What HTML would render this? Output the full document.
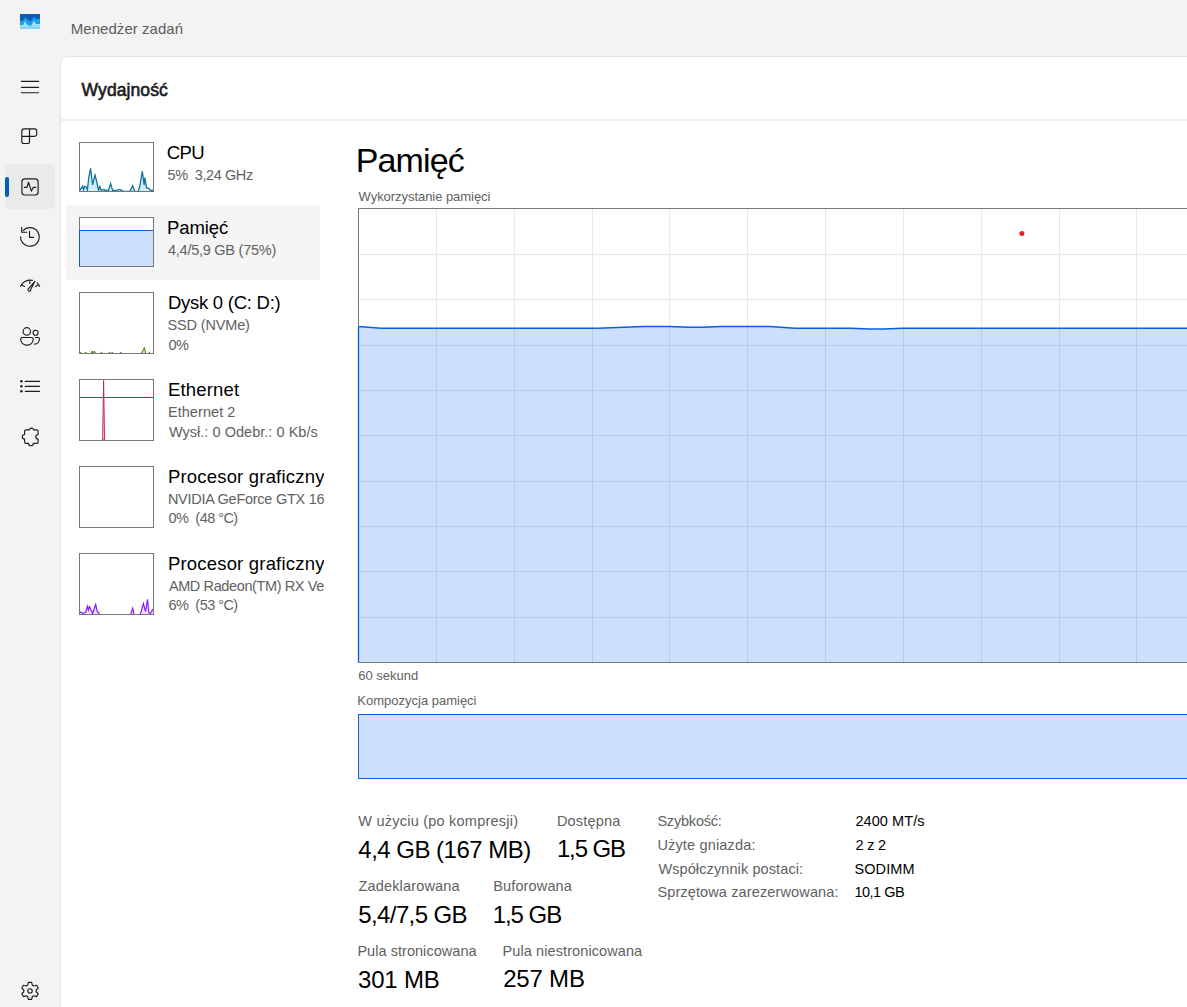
<!DOCTYPE html>
<html><head><meta charset="utf-8">
<style>
*{box-sizing:border-box;margin:0;padding:0}
html,body{width:1187px;height:1007px;overflow:hidden;background:#f3f3f3;font-family:"Liberation Sans",sans-serif;position:relative}
.abs{position:absolute;white-space:pre;line-height:1.15}
.t{position:absolute;white-space:pre;line-height:1.15;font-family:"Liberation Sans",sans-serif}
#title{left:71px;top:20px;font-size:15px;color:#5c5c5c}
#card{position:absolute;left:60px;top:56px;width:1200px;height:1000px;background:#fff;border:1px solid #e5e5e5;border-top-left-radius:8px}
#hdr{position:absolute;left:61px;top:119px;width:1130px;height:2px;background:#efefef}
#wyd{left:81px;top:80px;font-size:17px;font-weight:700;color:#1a1a1a;letter-spacing:-0.3px}
#navsel{position:absolute;left:5px;top:164px;width:50px;height:45px;background:#eaeaea;border-radius:5px}
#navind{position:absolute;left:5px;top:177px;width:4px;height:20px;background:#005fb8;border-radius:2px}
#lsel{position:absolute;left:66px;top:205px;width:254px;height:75px;background:#f5f5f5}
#list{position:absolute;left:0;top:0;width:324px;height:1007px;overflow:hidden}
.lname{font-size:19px;color:#000}
.lsub{font-size:14.5px;color:#616161}
.h1{left:356px;top:139px;font-size:35px;color:#000}
.cap{font-size:13.5px;color:#616161}
.stl{font-size:14px;color:#616161}
.stv{font-size:25px;color:#000}
.kv{font-size:14px;color:#616161}
.kvv{font-size:14px;color:#000}
svg.ov{position:absolute;left:0;top:0}
</style></head><body>
<div id="card"></div>
<div id="hdr"></div>
<div id="navsel"></div>
<div id="navind"></div>
<div id="lsel"></div>

<svg class="abs" style="left:0;top:0" width="60" height="40" viewBox="0 0 60 40">
<defs><linearGradient id="lg1" x1="0" y1="0" x2="0" y2="1"><stop offset="0" stop-color="#c4ecfd"/><stop offset="1" stop-color="#7fd0fb"/></linearGradient></defs>
<rect x="20" y="14" width="20" height="15" rx="0.6" fill="#0a5db0"/>
<path d="M20 20.8H22.8L25.2 17.1L27.1 19L30.5 21.6L34.2 16.8L36 19H40V29H20Z" fill="#1c9fe6"/>
<path d="M20 24.9H23.1L25.2 21.1L27.1 24.9L29.2 25.3L30.5 26.5L33.9 21.1L36 23.9H40V29H20Z" fill="url(#lg1)"/>
</svg>
<div class="t" style="left:70.8px;top:19.9px;font-size:15px;font-weight:400;letter-spacing:0.038px;color:#5c5c5c">Menedżer zadań</div><div class="t" style="left:81.6px;top:79.7px;font-size:17.5px;font-weight:400;letter-spacing:0.088px;color:#1a1a1a;-webkit-text-stroke:0.6px #1a1a1a">Wydajność</div>

<svg class="ov" width="1187" height="1007" viewBox="0 0 1187 1007">
<!-- mini graphs -->
<g fill="#fff" stroke="none" stroke-width="1">
<rect x="79.5" y="142.5" width="74" height="49"/>
<rect x="79.5" y="217.5" width="74" height="49"/>
<rect x="79.5" y="292.5" width="74" height="61"/>
<rect x="79.5" y="379.5" width="74" height="61"/>
<rect x="79.5" y="466.5" width="74" height="61"/>
<rect x="79.5" y="553.5" width="74" height="61"/>
</g>
<g clip-path="url(#cc)"><polygon points="79.3,187.7 80.1,189.8 82.6,186.3 83.6,189.8 84.6,186.3 85.7,186.3 87.4,189.8 88.8,177.3 90.5,168.3 92.6,184.9 95.0,175.2 96.7,181.5 98.5,190.1 99.8,186.6 101.2,190.4 103.6,189.4 105.0,190.4 108.5,190.4 110.6,183.5 112.6,190.4 116.1,190.4 119.9,189.4 123.7,191.4 129.9,191.4 132.7,185.6 134.7,191.4 138.2,191.4 139.9,185.6 142.3,171.4 144.1,184.9 144.8,177.7 146.5,187.7 148.6,188.4 150.6,190.4 153.4,190.4 153.4,191 79.3,191" fill="#cdeef8"/>
<polyline points="79.3,187.7 80.1,189.8 82.6,186.3 83.6,189.8 84.6,186.3 85.7,186.3 87.4,189.8 88.8,177.3 90.5,168.3 92.6,184.9 95.0,175.2 96.7,181.5 98.5,190.1 99.8,186.6 101.2,190.4 103.6,189.4 105.0,190.4 108.5,190.4 110.6,183.5 112.6,190.4 116.1,190.4 119.9,189.4 123.7,191.4 129.9,191.4 132.7,185.6 134.7,191.4 138.2,191.4 139.9,185.6 142.3,171.4 144.1,184.9 144.8,177.7 146.5,187.7 148.6,188.4 150.6,190.4 153.4,190.4" fill="none" stroke="#13739a" stroke-width="1.3"/></g>
<rect x="80" y="230" width="73" height="36" fill="#cce0fc"/>
<line x1="80" y1="230.5" x2="153" y2="230.5" stroke="#0a5ce0" stroke-width="1.1"/>
<clipPath id="cd"><rect x="80" y="293" width="73" height="60.6"/></clipPath><path clip-path="url(#cd)" d="M79.3 353.6 L80.3 352.1 L81.5 353.6Z M85 353.6 L85.8 352.1 L86.7 353.6Z M90.9 353.6 L92.2 351.1 L93.3 353.6Z M93.3 353.6 L94.3 351.1 L95.7 353.6Z M99.8 353.6 L101.4 352.40000000000003 L103 353.6Z M108.8 353.6 L109.3 352.1 L109.9 353.6Z M111.2 353.6 L112.1 352.1 L113 353.6Z M119.9 353.6 L120.7 352.1 L121.6 353.6Z M141.3 353.6 L144.4 347.6 L145.8 353.6Z M148.9 353.6 L149.4 352.1 L150 353.6Z " fill="#cfe5b8" stroke="#3d7d0c" stroke-width="1" stroke-linejoin="round"/>
<line x1="80" y1="397.5" x2="153" y2="397.5" stroke="#c2185b" stroke-width="1.2"/>
<path d="M103.6 380.5 L102.6 440 L104.6 440 Z" fill="#f3c6d6" stroke="#c2185b" stroke-width="0.9" stroke-linejoin="round"/>
<clipPath id="cg1"><rect x="80" y="554" width="73" height="60.6"/></clipPath><clipPath id="cc"><rect x="80" y="143" width="73" height="48.6"/></clipPath>
<g clip-path="url(#cg1)"><polygon points="79.3,612.5 80.8,612.1 82.9,613.5 84.6,612.8 85.7,612.1 87.4,606.2 88.4,610.0 89.5,606.6 90.9,609.4 92.6,613.5 95.7,604.5 97.4,611.8 98.8,612.8 99.8,614.6 130.6,614.6 132.7,608.3 134.1,614.6 140.3,614.6 143.4,603.5 145.5,611.4 147.5,599.3 148.9,612.8 150.6,613.2 152.7,609.4 153.4,609.4 153.4,614 79.3,614" fill="#eddcfb"/>
<polyline points="79.3,612.5 80.8,612.1 82.9,613.5 84.6,612.8 85.7,612.1 87.4,606.2 88.4,610.0 89.5,606.6 90.9,609.4 92.6,613.5 95.7,604.5 97.4,611.8 98.8,612.8 99.8,614.6 130.6,614.6 132.7,608.3 134.1,614.6 140.3,614.6 143.4,603.5 145.5,611.4 147.5,599.3 148.9,612.8 150.6,613.2 152.7,609.4 153.4,609.4" fill="none" stroke="#8a1ef0" stroke-width="1.2"/></g>
<g fill="none" stroke="#777" stroke-width="1">
<rect x="79.5" y="142.5" width="74" height="49"/>
<rect x="79.5" y="217.5" width="74" height="49"/>
<rect x="79.5" y="292.5" width="74" height="61"/>
<rect x="79.5" y="379.5" width="74" height="61"/>
<rect x="79.5" y="466.5" width="74" height="61"/>
<rect x="79.5" y="553.5" width="74" height="61"/>
</g>
<line x1="79.5" y1="230" x2="79.5" y2="266.5" stroke="#0a5ce0" stroke-width="1"/>

<!-- main chart -->
<rect x="358.5" y="208.5" width="900" height="453" fill="#fff"/>
<polygon points="358.5,326.5 381,328.2 598,328.2 643,326.5 670,326.5 689,327.3 702,327.3 721,326.5 770,326.5 795,328.2 851,328.2 869,329.1 883,329.1 903,328.2 1200,328.2 1200,662 358,662" fill="#cce0fc"/>
<g stroke="#000" opacity="0.085" stroke-width="1"><line x1="436.5" y1="209" x2="436.5" y2="662" /><line x1="514.5" y1="209" x2="514.5" y2="662" /><line x1="592.5" y1="209" x2="592.5" y2="662" /><line x1="669.5" y1="209" x2="669.5" y2="662" /><line x1="747.5" y1="209" x2="747.5" y2="662" /><line x1="825.5" y1="209" x2="825.5" y2="662" /><line x1="903.5" y1="209" x2="903.5" y2="662" /><line x1="981.5" y1="209" x2="981.5" y2="662" /><line x1="1059.5" y1="209" x2="1059.5" y2="662" /><line x1="1136.5" y1="209" x2="1136.5" y2="662" /><line x1="359" y1="254.5" x2="1200" y2="254.5" /><line x1="359" y1="299.5" x2="1200" y2="299.5" /><line x1="359" y1="345.5" x2="1200" y2="345.5" /><line x1="359" y1="390.5" x2="1200" y2="390.5" /><line x1="359" y1="435.5" x2="1200" y2="435.5" /><line x1="359" y1="481.5" x2="1200" y2="481.5" /><line x1="359" y1="526.5" x2="1200" y2="526.5" /><line x1="359" y1="571.5" x2="1200" y2="571.5" /><line x1="359" y1="617.5" x2="1200" y2="617.5" /></g>
<polyline points="358.5,326.5 381,328.2 598,328.2 643,326.5 670,326.5 689,327.3 702,327.3 721,326.5 770,326.5 795,328.2 851,328.2 869,329.1 883,329.1 903,328.2 1200,328.2" fill="none" stroke="#0a5ce0" stroke-width="1.5"/>
<line x1="358.5" y1="326.5" x2="358.5" y2="662.5" stroke="#0a5ce0" stroke-width="1.3"/>
<path d="M1200 208.5 H358.5 V326" fill="none" stroke="#777" stroke-width="1"/>
<line x1="358" y1="662.5" x2="1200" y2="662.5" stroke="#777" stroke-width="1"/>
<circle cx="1021.9" cy="233.4" r="2.5" fill="#e02020"/>
<!-- composition -->
<rect x="358.5" y="714.5" width="900" height="64" fill="#cce0fc" stroke="#0a5ce0" stroke-width="1"/>
</svg>

<div id="list"><div class="t" style="left:166.7px;top:141.9px;font-size:18.5px;font-weight:400;letter-spacing:-0.6px;color:#000">CPU</div><div class="t" style="left:167.0px;top:216.9px;font-size:18.5px;font-weight:400;letter-spacing:-0.08px;color:#000">Pamięć</div><div class="t" style="left:167.9px;top:291.6px;font-size:18.5px;font-weight:400;letter-spacing:-0.254px;color:#000">Dysk 0 (C: D:)</div><div class="t" style="left:167.9px;top:378.8px;font-size:18.5px;font-weight:400;letter-spacing:0.186px;color:#000">Ethernet</div><div class="t" style="left:167.9px;top:465.9px;font-size:18.5px;font-weight:400;letter-spacing:0.194px;color:#000">Procesor graficzny 0</div><div class="t" style="left:167.9px;top:552.9px;font-size:18.5px;font-weight:400;letter-spacing:0.194px;color:#000">Procesor graficzny 1</div><div class="t" style="left:167.5px;top:167.0px;font-size:14.5px;font-weight:400;letter-spacing:-0.418px;color:#616161">5%  3,24 GHz</div><div class="t" style="left:168.0px;top:242.0px;font-size:14.5px;font-weight:400;letter-spacing:-0.253px;color:#616161">4,4/5,9 GB (75%)</div><div class="t" style="left:167.5px;top:316.7px;font-size:14.5px;font-weight:400;letter-spacing:-0.156px;color:#616161">SSD (NVMe)</div><div class="t" style="left:168.5px;top:336.5px;font-size:14.5px;font-weight:400;letter-spacing:-0.6px;color:#616161">0%</div><div class="t" style="left:167.9px;top:403.5px;font-size:14.5px;font-weight:400;letter-spacing:0.067px;color:#616161">Ethernet 2</div><div class="t" style="left:168.9px;top:423.6px;font-size:14.5px;font-weight:400;letter-spacing:0.032px;color:#616161">Wysł.: 0 Odebr.: 0 Kb/s</div><div class="t" style="left:167.9px;top:490.5px;font-size:14.5px;font-weight:400;letter-spacing:-0.265px;color:#616161">NVIDIA GeForce GTX 1650</div><div class="t" style="left:168.5px;top:510.0px;font-size:14.5px;font-weight:400;letter-spacing:-0.54px;color:#616161">0%  (48 °C)</div><div class="t" style="left:168.9px;top:577.5px;font-size:14.5px;font-weight:400;letter-spacing:-0.388px;color:#616161">AMD Radeon(TM) RX Vega 10 Graphics</div><div class="t" style="left:168.5px;top:597.0px;font-size:14.5px;font-weight:400;letter-spacing:-0.54px;color:#616161">6%  (53 °C)</div></div>

<div class="t" style="left:355.8px;top:140.8px;font-size:34px;font-weight:400;letter-spacing:-0.88px;color:#000">Pamięć</div><div class="t" style="left:358.6px;top:189.9px;font-size:13px;font-weight:400;letter-spacing:-0.05px;color:#616161">Wykorzystanie pamięci</div><div class="t" style="left:358.3px;top:669.1px;font-size:13px;font-weight:400;letter-spacing:0px;color:#616161">60 sekund</div><div class="t" style="left:357.3px;top:694.1px;font-size:13px;font-weight:400;letter-spacing:0px;color:#616161">Kompozycja pamięci</div><div class="t" style="left:358.3px;top:812.8px;font-size:14.5px;font-weight:400;letter-spacing:0.227px;color:#616161">W użyciu (po kompresji)</div><div class="t" style="left:556.9px;top:812.7px;font-size:14.5px;font-weight:400;letter-spacing:0.186px;color:#616161">Dostępna</div><div class="t" style="left:358.4px;top:877.7px;font-size:14.5px;font-weight:400;letter-spacing:0.175px;color:#616161">Zadeklarowana</div><div class="t" style="left:493.2px;top:877.8px;font-size:14.5px;font-weight:400;letter-spacing:0.144px;color:#616161">Buforowana</div><div class="t" style="left:357.4px;top:942.5px;font-size:14.5px;font-weight:400;letter-spacing:0.044px;color:#616161">Pula stronicowana</div><div class="t" style="left:502.6px;top:942.7px;font-size:14.5px;font-weight:400;letter-spacing:0.089px;color:#616161">Pula niestronicowana</div><div class="t" style="left:657.4px;top:813.1px;font-size:14.5px;font-weight:400;letter-spacing:-0.2px;color:#616161">Szybkość:</div><div class="t" style="left:657.4px;top:836.7px;font-size:14.5px;font-weight:400;letter-spacing:0.162px;color:#616161">Użyte gniazda:</div><div class="t" style="left:658.4px;top:860.7px;font-size:14.5px;font-weight:400;letter-spacing:0.105px;color:#616161">Współczynnik postaci:</div><div class="t" style="left:657.4px;top:884.3px;font-size:14.5px;font-weight:400;letter-spacing:0.13px;color:#616161">Sprzętowa zarezerwowana:</div><div class="t" style="left:358.3px;top:835.8px;font-size:24px;font-weight:400;letter-spacing:-0.514px;color:#000">4,4 GB (167 MB)</div><div class="t" style="left:556.9px;top:835.2px;font-size:24px;font-weight:400;letter-spacing:-1.12px;color:#000">1,5 GB</div><div class="t" style="left:358.3px;top:900.7px;font-size:24px;font-weight:400;letter-spacing:-0.611px;color:#000">5,4/7,5 GB</div><div class="t" style="left:492.7px;top:900.5px;font-size:24px;font-weight:400;letter-spacing:-1.04px;color:#000">1,5 GB</div><div class="t" style="left:358.0px;top:965.7px;font-size:24px;font-weight:400;letter-spacing:-0.18px;color:#000">301 MB</div><div class="t" style="left:503.2px;top:965.4px;font-size:24px;font-weight:400;letter-spacing:-0.2px;color:#000">257 MB</div><div class="t" style="left:855.4px;top:812.9px;font-size:14.5px;font-weight:400;letter-spacing:0.075px;color:#000">2400 MT/s</div><div class="t" style="left:855.4px;top:836.7px;font-size:14.5px;font-weight:400;letter-spacing:-0.175px;color:#000">2 z 2</div><div class="t" style="left:854.4px;top:860.5px;font-size:14.5px;font-weight:400;letter-spacing:0.12px;color:#000">SODIMM</div><div class="t" style="left:854.4px;top:884.4px;font-size:14.5px;font-weight:400;letter-spacing:-0.5px;color:#000">10,1 GB</div>

<svg width="60" height="1007" viewBox="0 0 60 1007" style="position:absolute;left:0;top:0">
<g fill="none" stroke="#1c1c1c" stroke-width="1.15" stroke-linecap="round" stroke-linejoin="round">
<path d="M21.4 81.3H38.6M21.4 87.3H38.6M21.4 92.7H38.6"/>
<path d="M29.5 128.9V141.4a2.1 2.1 0 0 1-2.1 2.1H23.9a2.1 2.1 0 0 1-2.1-2.1V131a2.1 2.1 0 0 1 2.1-2.1H34.6a2.1 2.1 0 0 1 2.1 2.1V134.2a2.1 2.1 0 0 1-2.1 2.1H21.8"/>
<rect x="21.9" y="178.8" width="16.2" height="16.2" rx="3"/>
<path d="M24.3 187.4H27L28.5 182.2L31.4 191.1L33.2 187.4H35.7"/>
<path d="M20.6 236.8A9.3 9.3 0 1 0 23.1 230.6"/>
<path d="M21.7 227.3V232.2H26.8"/>
<path d="M29.5 231.3V237.3H33.5"/>
<path d="M20.5 286.3A10.5 10.5 0 0 1 32.4 280.4"/>
<path d="M37.2 282.8A10.5 10.5 0 0 1 39.5 286.3"/>
<path d="M29.9 281.3V283.4M21.8 284.9L24.4 286.4M35.6 286.4L38.1 284.9"/>
<path d="M35 281.3L30.8 289.3A1.5 1.5 0 0 1 28.2 290.6A1.6 1.6 0 0 1 28.1 289.2L35 281.3Z"/>
<circle cx="26.8" cy="331.4" r="3.7"/>
<circle cx="35.6" cy="332.7" r="2.5"/>
<path d="M22.3 337.5H31.6A1.6 1.6 0 0 1 33.2 339.1V339.5A5.9 5.9 0 0 1 27 345.1A5.9 5.9 0 0 1 20.7 339.5V339.1A1.6 1.6 0 0 1 22.3 337.5Z"/>
<path d="M35.4 337.5H38A1.5 1.5 0 0 1 39.5 339A5.2 5.2 0 0 1 34.6 344.1"/>
<path d="M25.2 381.3H39.5M25.2 386.3H39.5M25.2 391.3H39.5"/>
<path d="M27.68 985.15 L28.34 982.36 L31.66 982.36 L32.32 985.15 A6.2 6.2 0 0 1 33.82 986.01 L36.57 985.19 L38.23 988.07 L36.14 990.04 A6.2 6.2 0 0 1 36.14 991.76 L38.23 993.73 L36.57 996.61 L33.82 995.79 A6.2 6.2 0 0 1 32.32 996.65 L31.66 999.44 L28.34 999.44 L27.68 996.65 A6.2 6.2 0 0 1 26.18 995.79 L23.43 996.61 L21.77 993.73 L23.86 991.76 A6.2 6.2 0 0 1 23.86 990.04 L21.77 988.07 L23.43 985.19 L26.18 986.01 A6.2 6.2 0 0 1 27.68 985.15Z"/>
<circle cx="30" cy="990.9" r="2.2"/>
<path d="M26 429.9H29.3A2.2 2.2 0 0 1 33.6 429.9H36.7A1.4 1.4 0 0 1 38.1 431.3V434.5A2.3 2.3 0 0 0 38.1 439.1V442A1.4 1.4 0 0 1 36.7 443.4H33.3A2.3 2.3 0 0 1 28.6 443.4H26A1.4 1.4 0 0 1 24.6 442V439.1A2.3 2.3 0 0 1 24.6 434.5V431.3A1.4 1.4 0 0 1 26 429.9Z"/>
</g>
<g fill="#1c1c1c"><circle cx="21.4" cy="381.3" r="1.25"/><circle cx="21.4" cy="386.3" r="1.25"/><circle cx="21.4" cy="391.3" r="1.25"/></g>
</svg>
</body></html>
